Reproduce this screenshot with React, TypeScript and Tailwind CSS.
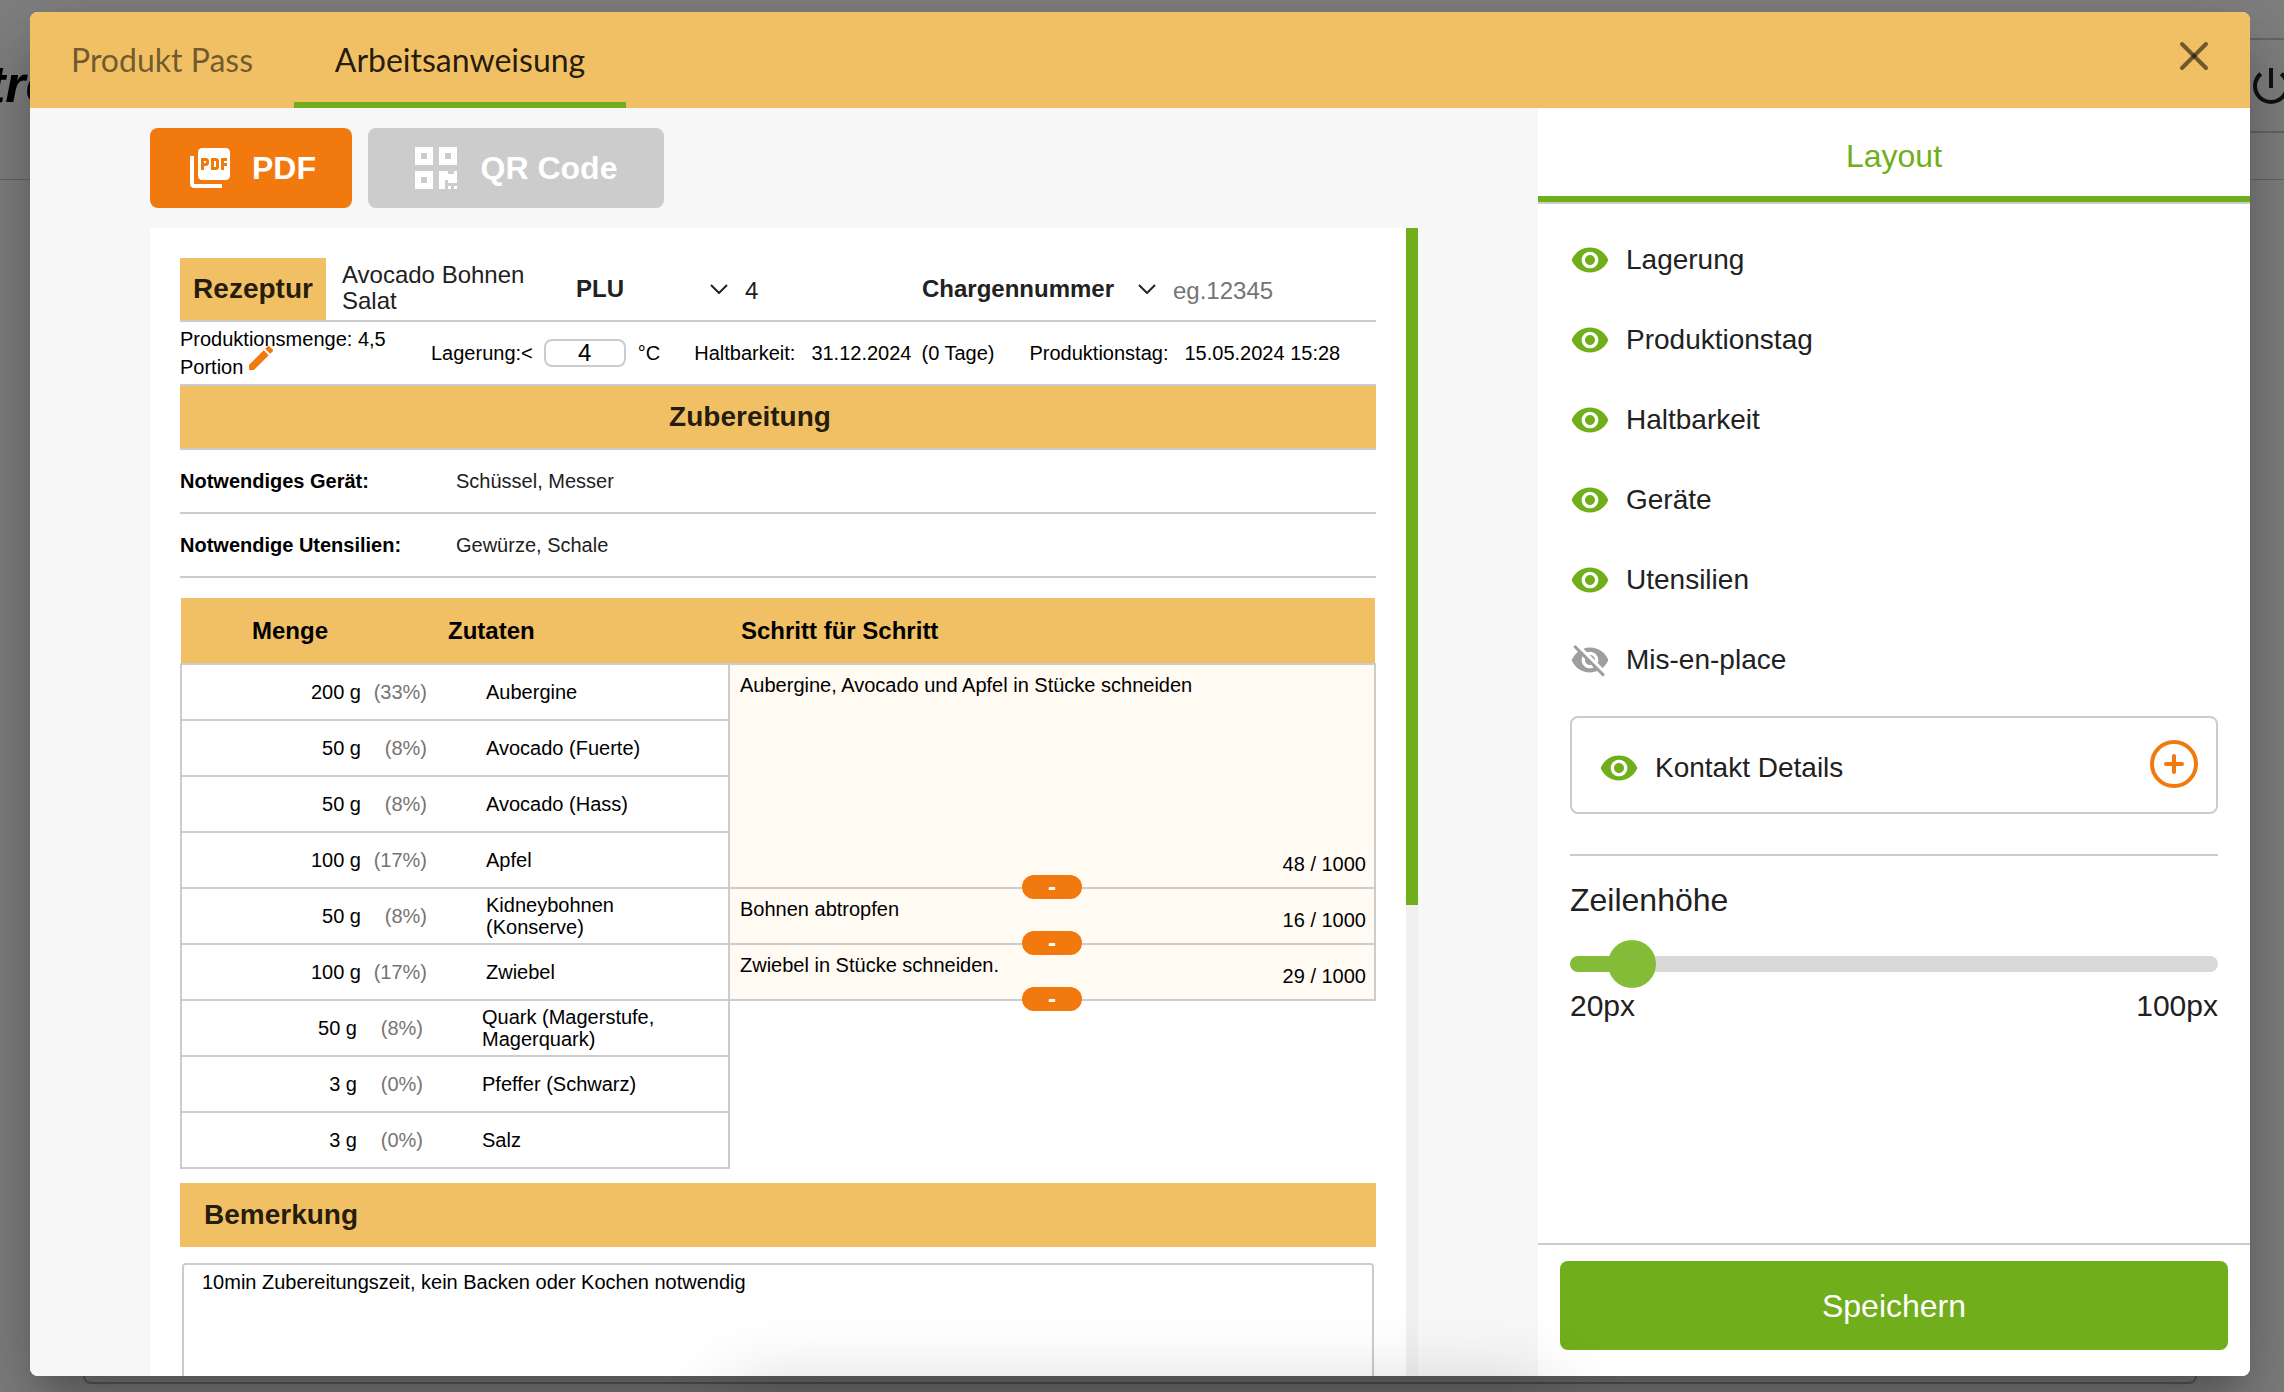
import React, { useState } from "react";
import { FaQrcode } from "react-icons/fa";
import { MdPictureAsPdf, MdPowerSettingsNew, MdVisibility, MdVisibilityOff } from "react-icons/md";

interface Step {
  text: string;
  count: number;
  span: number;
}

interface Ingredient {
  amount: string;
  share: string;
  name: string;
  step?: Step;
  loose?: boolean;
}

const INGREDIENTS: Ingredient[] = [
  {
    amount: "200 g",
    share: "(33%)",
    name: "Aubergine",
    step: { text: "Aubergine, Avocado und Apfel in Stücke schneiden", count: 48, span: 4 },
  },
  { amount: "50 g", share: "(8%)", name: "Avocado (Fuerte)" },
  { amount: "50 g", share: "(8%)", name: "Avocado (Hass)" },
  { amount: "100 g", share: "(17%)", name: "Apfel" },
  {
    amount: "50 g",
    share: "(8%)",
    name: "Kidneybohnen (Konserve)",
    step: { text: "Bohnen abtropfen", count: 16, span: 1 },
  },
  {
    amount: "100 g",
    share: "(17%)",
    name: "Zwiebel",
    step: { text: "Zwiebel in Stücke schneiden.", count: 29, span: 1 },
  },
  // Zutaten ohne Arbeitsschritt
  { amount: "50 g", share: "(8%)", name: "Quark (Magerstufe, Magerquark)", loose: true },
  { amount: "3 g", share: "(0%)", name: "Pfeffer (Schwarz)", loose: true },
  { amount: "3 g", share: "(0%)", name: "Salz", loose: true },
];

const LAYOUT_OPTIONS = [
  { label: "Lagerung", visible: true },
  { label: "Produktionstag", visible: true },
  { label: "Haltbarkeit", visible: true },
  { label: "Geräte", visible: true },
  { label: "Utensilien", visible: true },
  { label: "Mis-en-place", visible: false },
];

// Seite hinter dem Dialog
function PageBehind() {
  return (
    <div className="flex h-screen flex-col bg-[#808080]">
      <header className="flex h-[180px] items-start justify-between border-b border-[#666]">
        <div className="mt-[52px] w-[80px] text-[52px] leading-[64px] font-black text-black italic">
          <span className="-ml-3">tre</span>
        </div>
        <div className="mt-[38px] flex h-[95px] w-[120px] items-center border-y-2 border-[#666] pl-[83px]">
          <MdPowerSettingsNew className="size-12 shrink-0 text-[#111]" />
        </div>
      </header>
      <main className="flex flex-1 pr-[87px] pb-2 pl-[83px]">
        <div className="flex-1 rounded-lg border-2 border-t-0 border-[#5c5c5c]" />
      </main>
    </div>
  );
}

function CloseIcon() {
  return (
    <svg viewBox="0 0 32 32" className="size-8" stroke="#000" strokeWidth="4" strokeLinecap="round">
      <line x1="4" y1="4" x2="28" y2="28" strokeOpacity="0.54" />
      <line x1="28" y1="4" x2="4" y2="28" strokeOpacity="0.54" />
    </svg>
  );
}

function PencilIcon() {
  return (
    <svg viewBox="0 0 24 24" className="size-8" fill="currentColor">
      <path d="M3 17.46v3.04c0 .28.22.5.5.5h3.04c.13 0 .26-.05.35-.15L17.81 9.94l-3.75-3.75L3.15 17.1c-.1.1-.15.22-.15.36zM20.71 7.04a1 1 0 0 0 0-1.41l-2.34-2.34a1 1 0 0 0-1.41 0l-1.83 1.83 3.75 3.75 1.83-1.83z" />
    </svg>
  );
}

function Chevron() {
  return (
    <svg
      viewBox="0 0 18 10"
      className="pointer-events-none absolute top-1/2 right-0 h-[10px] w-[18px] -translate-y-1/2"
      fill="none"
      stroke="#222"
      strokeWidth="2"
    >
      <path d="M1 1l8 8 8-8" />
    </svg>
  );
}

function DialogHeader() {
  return (
    <header className="flex h-24 shrink-0 items-stretch justify-between bg-[#f1c064] font-[Lato,sans-serif] text-[32px]">
      <nav className="flex">
        <button className="min-w-[264px] border-b-[6px] border-transparent px-10 pt-[6px] text-black/55">
          Produkt Pass
        </button>
        <button className="min-w-[332px] border-b-[6px] border-[#70ae1b] px-10 pt-[6px] text-black/87">
          Arbeitsanweisung
        </button>
      </nav>
      <button aria-label="Schließen" className="mr-10 pb-2">
        <CloseIcon />
      </button>
    </header>
  );
}

function RecipeHead() {
  return (
    <div className="flex h-16 shrink-0 items-center border-b-2 border-[#ccc] text-[24px] text-[#212121]">
      <h1 className="flex h-full w-[146px] items-center justify-center bg-[#f1c064] text-[28px] font-bold text-black/87">
        Rezeptur
      </h1>
      <p className="w-[250px] pr-10 pb-[2px] pl-4 leading-[26px]">Avocado Bohnen Salat</p>
      <div className="relative w-[152px]">
        <select aria-label="Feld 1" className="w-full appearance-none font-bold">
          <option>PLU</option>
        </select>
        <Chevron />
      </div>
      <input aria-label="PLU" defaultValue="4" className="w-[194px] pt-1 pl-[17px] outline-none" />
      <div className="relative w-[234px]">
        <select aria-label="Feld 2" className="w-full appearance-none font-bold">
          <option>Chargennummer</option>
        </select>
        <Chevron />
      </div>
      <input
        aria-label="Chargennummer"
        placeholder="eg.12345"
        className="w-0 flex-1 pt-1 pl-[17px] outline-none placeholder:text-[#757575]"
      />
    </div>
  );
}

function RecipeMeta() {
  return (
    <div className="flex h-16 shrink-0 items-center border-b-2 border-[#ccc] text-black">
      <div className="w-[251px] pr-10 leading-7">
        Produktionsmenge: 4,5 Portion{" "}
        <button aria-label="Menge bearbeiten" className="-mt-4 -mb-1 -ml-1 align-baseline text-[#f2790d]">
          <span className="flex pt-1">
            <PencilIcon />
          </span>
        </button>
      </div>
      <label htmlFor="lagerung">Lagerung:&lt;</label>
      <input
        id="lagerung"
        defaultValue="4"
        className="mr-3 ml-[11px] h-7 w-[82px] rounded-lg border-2 border-[#ccc] text-center text-[24px] leading-6"
      />
      <span>°C</span>
      <span className="ml-[34px]">Haltbarkeit:</span>
      <span className="ml-4">31.12.2024</span>
      <span className="ml-[10px]">(0 Tage)</span>
      <span className="ml-[35px]">Produktionstag:</span>
      <span className="ml-4">15.05.2024 15:28</span>
    </div>
  );
}

function NeedRow({ label, value }: { label: string; value: string }) {
  return (
    <div className="flex h-16 shrink-0 items-center border-b-2 border-[#ccc]">
      <span className="w-[276px] font-bold text-black">{label}</span>
      <span className="text-[#212121]">{value}</span>
    </div>
  );
}

function StepCell({ step }: { step: Step }) {
  return (
    <td rowSpan={step.span} className="relative border-2 border-[#ccc] bg-[#fffaf2] pt-2 pl-[10px] align-top">
      <textarea
        aria-label="Arbeitsschritt"
        defaultValue={step.text}
        rows={1}
        className="block w-[80%] resize-none overflow-hidden leading-6 outline-none"
      />
      <span className="absolute right-2 bottom-[11px] leading-6">{step.count} / 1000</span>
      <button
        aria-label="Schritte verbinden"
        className="absolute -bottom-3 left-1/2 z-10 h-6 w-[60px] -translate-x-1/2 rounded-full bg-[#f2790d] text-[24px] leading-6 font-bold text-white"
      >
        -
      </button>
    </td>
  );
}

function IngredientTable() {
  return (
    <table className="mt-5 w-full shrink-0 table-fixed border-collapse text-black">
      <colgroup>
        <col className="w-[180px]" />
        <col className="w-[66px]" />
        <col className="w-[302px]" />
        <col />
      </colgroup>
      <thead>
        <tr className="h-[66px] border-b-2 border-[#d3a755] bg-[#f1c064] text-left text-[24px]">
          <th colSpan={2} className="pl-[71px]">Menge</th>
          <th className="pl-[21px]">Zutaten</th>
          <th className="pl-3">Schritt für Schritt</th>
        </tr>
      </thead>
      <tbody>
        {INGREDIENTS.map(item => (
          <tr key={item.name} className="h-14">
            <td className={`border-y-2 border-l-2 border-[#ccc] text-right ${item.loose ? "pr-1" : ""}`}>
              {item.amount}
            </td>
            <td className={`border-y-2 border-[#ccc] text-right text-[#757575] ${item.loose ? "pr-1" : ""}`}>
              {item.share}
            </td>
            <td
              className={`border-y-2 border-r-2 border-[#ccc] pr-[60px] leading-[22px] ${
                item.loose ? "pl-[55px]" : "pl-[59px]"
              }`}
            >
              {item.name}
            </td>
            {item.step && <StepCell step={item.step} />}
          </tr>
        ))}
      </tbody>
    </table>
  );
}

function Preview() {
  return (
    <section className="flex min-w-0 flex-1 flex-col bg-[#f7f7f7] px-[120px] pt-5">
      <div className="flex gap-4 text-[32px] font-bold text-white">
        <button className="flex h-20 w-[202px] items-center justify-center gap-[18px] rounded-lg bg-[#f2790d]">
          <MdPictureAsPdf className="size-12" />
          PDF
        </button>
        <button className="flex h-20 w-[296px] items-center justify-center gap-6 rounded-lg bg-[#ccc]">
          <FaQrcode className="h-12 w-[42px]" />
          QR Code
        </button>
      </div>
      <div className="mt-5 flex min-h-0 flex-1">
        <article className="flex min-w-0 flex-1 flex-col overflow-hidden bg-white p-[30px] pb-0 text-[20px]">
          <RecipeHead />
          <RecipeMeta />
          <h2 className="flex h-16 shrink-0 items-center justify-center border-b-2 border-[#ccc] bg-[#f1c064] pr-14 text-[28px] font-bold text-black/87">
            Zubereitung
          </h2>
          <NeedRow label="Notwendiges Gerät:" value="Schüssel, Messer" />
          <NeedRow label="Notwendige Utensilien:" value="Gewürze, Schale" />
          <IngredientTable />
          <h2 className="mt-[14px] flex h-16 shrink-0 items-center bg-[#f1c064] pl-6 text-[28px] font-bold text-black/87">
            Bemerkung
          </h2>
          <textarea
            aria-label="Bemerkung"
            defaultValue="10min Zubereitungszeit, kein Backen oder Kochen notwendig"
            className="mx-[2px] mt-4 h-60 shrink-0 resize-none rounded border-2 border-[#ccc] px-[18px] py-[5px] leading-6 text-black outline-none"
          />
        </article>
        <div className="w-3 bg-[#f0f0f0]">
          <div className="h-[59%] bg-[#70ae1b]" />
        </div>
      </div>
    </section>
  );
}

function LayoutPanel() {
  const [rowHeight, setRowHeight] = useState(25);

  return (
    <aside className="flex w-[712px] shrink-0 flex-col bg-white text-[28px] text-[#212121]">
      <h2 className="flex h-24 shrink-0 items-center justify-center border-b-2 border-[#ccc] text-[32px] text-[#70ae1b]">
        <span className="flex h-full w-full items-center justify-center border-b-[6px] border-[#70ae1b] pt-2">
          Layout
        </span>
      </h2>
      <div className="flex flex-1 flex-col px-8 pt-4">
        <ul>
          {LAYOUT_OPTIONS.map(option => (
            <li key={option.label}>
              <button className="flex h-20 items-center gap-4">
                {option.visible ? (
                  <MdVisibility className="size-10 text-[#70ae1b]" />
                ) : (
                  <MdVisibilityOff className="size-10 text-[#9e9e9e]" />
                )}
                {option.label}
              </button>
            </li>
          ))}
        </ul>
        <div className="mt-4 flex h-[98px] items-center justify-between rounded-lg border-2 border-[#ccc] pr-[18px] pl-[27px]">
          <span className="flex items-center gap-4 pt-[6px]">
            <MdVisibility className="size-10 text-[#70ae1b]" />
            Kontakt Details
          </span>
          <button aria-label="Kontakt Details hinzufügen" className="pb-[2px]">
            <svg viewBox="0 0 48 48" className="size-12" fill="none" stroke="#f2790d" strokeWidth="4" strokeLinecap="round">
              <circle cx="24" cy="24" r="22" />
              <path d="M24 16v16M16 24h16" />
            </svg>
          </button>
        </div>
        <hr className="mt-10 border-t-2 border-[#ccc]" />
        <label htmlFor="zeilenhoehe" className="mt-6 text-[32px] leading-10">
          Zeilenhöhe
        </label>
        <input
          id="zeilenhoehe"
          type="range"
          min={20}
          max={100}
          value={rowHeight}
          onChange={e => setRowHeight(Number(e.target.value))}
          className="mt-5 h-12 w-full appearance-none bg-transparent [&::-webkit-slider-runnable-track]:h-4 [&::-webkit-slider-runnable-track]:rounded-full [&::-webkit-slider-runnable-track]:bg-[linear-gradient(to_right,#84bb37_60px,#d9d9d9_60px)] [&::-webkit-slider-thumb]:-mt-4 [&::-webkit-slider-thumb]:size-12 [&::-webkit-slider-thumb]:appearance-none [&::-webkit-slider-thumb]:rounded-full [&::-webkit-slider-thumb]:bg-[#84bb37]"
        />
        <div className="flex justify-between text-[30px] leading-9">
          <span>20px</span>
          <span>100px</span>
        </div>
      </div>
      <footer className="border-t-2 border-[#ccc] px-[22px] pt-4 pb-[26px]">
        <button className="h-[89px] w-full rounded-lg bg-[#70ae1b] text-[32px] text-white">Speichern</button>
      </footer>
    </aside>
  );
}

export default function App() {
  return (
    <div className="relative overflow-hidden font-['Liberation_Sans',Arial,sans-serif]">
      <PageBehind />
      <div className="absolute inset-0 flex pt-3 pr-[34px] pb-4 pl-[30px]">
        <div
          role="dialog"
          aria-label="Arbeitsanweisung"
          className="flex min-w-0 flex-1 flex-col overflow-hidden rounded-lg bg-white shadow-[0_22px_30px_-14px_rgba(0,0,0,0.2),0_48px_76px_6px_rgba(0,0,0,0.14),0_18px_92px_16px_rgba(0,0,0,0.12)]"
        >
          <DialogHeader />
          <div className="flex min-h-0 flex-1">
            <Preview />
            <LayoutPanel />
          </div>
        </div>
      </div>
      {/* weicher Schatten am unteren Fensterrand */}
      <div className="pointer-events-none absolute top-full left-[32%] h-20 w-[36%] shadow-[0_0_80px_0_rgba(0,0,0,0.2)]" />
    </div>
  );
}
